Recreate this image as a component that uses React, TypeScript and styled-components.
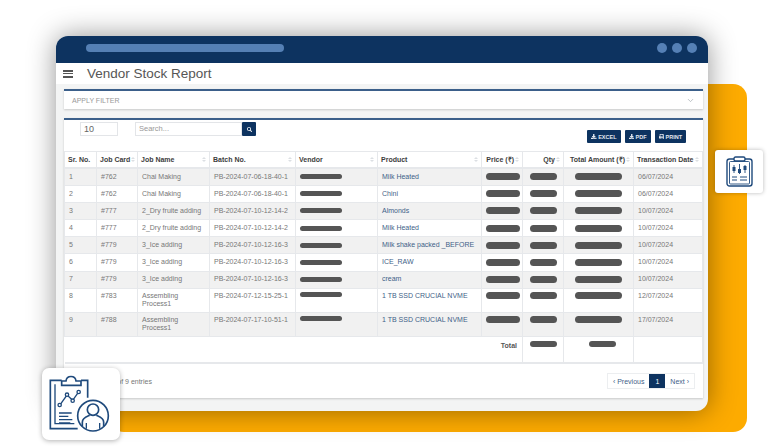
import styled, { createGlobalStyle } from 'styled-components';
import { FaDownload, FaPrint, FaSearch } from 'react-icons/fa';
import { ChevronDown } from 'lucide-react';

const navy = '#0d3360';

const GlobalStyle = createGlobalStyle`
  html, body {
    margin: 0;
    padding: 0;
    background: #fff;
    font-family: "Liberation Sans", Arial, sans-serif;
  }
`;

const Stage = styled.div`
  position: relative;
  width: 770px;
  height: 447px;
  overflow: hidden;
  padding: 36px 0 0 56px;
  box-sizing: border-box;
`;

const OrangePanel = styled.div`
  position: absolute;
  left: 110px;
  top: 84px;
  width: 637px;
  height: 348px;
  background: #fdab00;
  border-radius: 14px;
`;

const Window = styled.div`
  position: relative;
  width: 652px;
  height: 375px;
  border-radius: 12px;
  background: #f3f4f4;
  box-shadow: 0 0 28px rgba(0, 0, 0, 0.42);
  display: flex;
  flex-direction: column;
  overflow: hidden;
`;

const TitleBar = styled.div`
  height: 27px;
  flex: none;
  background: ${navy};
  display: flex;
  align-items: center;
  justify-content: space-between;
  padding: 0 11px 3px 30px;
  box-sizing: border-box;
`;

const AddressPill = styled.div`
  width: 198px;
  height: 8px;
  border-radius: 4px;
  background: #5580b5;
`;

const Dots = styled.div`
  display: flex;
  gap: 5px;
`;

const Dot = styled.span`
  width: 10px;
  height: 10px;
  border-radius: 50%;
  background: #5580b5;
`;

const PageHeader = styled.div`
  height: 21px;
  flex: none;
  background: #fff;
  display: flex;
  align-items: center;
  padding-left: 7px;
`;

const Burger = styled.div`
  width: 10px;
  height: 8px;
  border-top: 2px solid #555;
  border-bottom: 2px solid #555;
  box-sizing: border-box;
  margin-right: 14px;
  position: relative;
  &::after {
    content: '';
    display: block;
    height: 1.5px;
    margin-top: 1.25px;
    background: #555;
  }
`;

const PageTitle = styled.h1`
  margin: 0;
  font-size: 13.5px;
  font-weight: 400;
  color: #565656;
`;

const Content = styled.div`
  flex: 1;
  padding: 5px 5px 13px 8px;
  display: flex;
  flex-direction: column;
  gap: 9px;
`;

const FilterCard = styled.div`
  height: 20px;
  flex: none;
  box-sizing: border-box;
  background: #fff;
  border-top: 2px solid #3b5f8a;
  box-shadow: 0 1px 2px rgba(0, 0, 0, 0.18);
  display: flex;
  align-items: center;
  justify-content: space-between;
  padding: 0 8px;
  font-size: 7px;
  color: #999;
`;

const TableCard = styled.div`
  flex: 1;
  box-sizing: border-box;
  background: #fff;
  border-top: 2px solid #3b5f8a;
  box-shadow: 0 1px 2px rgba(0, 0, 0, 0.18);
  display: flex;
  flex-direction: column;
`;

const Toolbar = styled.div`
  height: 31px;
  flex: none;
  display: flex;
  align-items: flex-start;
  padding: 2px 17px 0 16px;
  box-sizing: border-box;
`;

const LengthInput = styled.div`
  width: 38px;
  height: 14px;
  box-sizing: border-box;
  border: 1px solid #e3e5e8;
  font-size: 9px;
  line-height: 12px;
  padding-left: 3px;
  color: #666;
  margin-right: 17px;
`;

const SearchInput = styled.div`
  width: 107px;
  height: 14px;
  box-sizing: border-box;
  border: 1px solid #e3e5e8;
  font-size: 7.5px;
  line-height: 12px;
  padding-left: 3px;
  color: #999;
`;

const SearchButton = styled.div`
  width: 14px;
  height: 14px;
  background: ${navy};
  color: #fff;
  font-size: 5px;
  display: flex;
  align-items: center;
  justify-content: center;
  border-radius: 1px;
`;

const ExportGroup = styled.div`
  margin-left: auto;
  display: flex;
  gap: 4px;
  padding-top: 8px;
`;

const ExportButton = styled.div`
  height: 13px;
  padding: 0 4px;
  background: ${navy};
  color: #e4e9f0;
  font-size: 5.5px;
  font-weight: 700;
  display: flex;
  align-items: center;
  gap: 1.5px;
  border-radius: 1px;
`;

const Table = styled.table`
  width: 638px;
  table-layout: fixed;
  border-collapse: collapse;
  font-size: 7px;
  color: #777;
`;

const HeadCell = styled.th<{ $right?: boolean }>`
  height: 15px;
  padding: 0 3px;
  border: 1px solid #e6e8eb;
  border-bottom-width: 2px;
  background: #fff;
  color: #3d3d3d;
  font-weight: 700;
  text-align: left;
  white-space: nowrap;
`;

const HeadInner = styled.div<{ $right?: boolean }>`
  display: flex;
  align-items: center;
  justify-content: ${p => (p.$right ? 'flex-end' : 'space-between')};
  gap: 1px;
`;

const SortMark = styled.span`
  flex: none;
  display: flex;
  flex-direction: column;
  gap: 1px;
  &::before,
  &::after {
    content: '';
    width: 0;
    height: 0;
    border-left: 2px solid transparent;
    border-right: 2px solid transparent;
  }
  &::before {
    border-bottom: 2.5px solid #dcdfe3;
  }
  &::after {
    border-top: 2.5px solid #dcdfe3;
  }
`;

const Row = styled.tr<{ $shade: boolean; $tall?: boolean }>`
  height: ${p => (p.$tall ? '24px' : '17.2px')};
  background: ${p => (p.$shade ? '#f1f1f1' : '#fff')};
`;

const Cell = styled.td<{ $product?: boolean }>`
  padding: 0 4px;
  border: 1px solid #e6e8eb;
  vertical-align: ${p => (p.theme?.top ? 'top' : 'inherit')};
  line-height: 8.5px;
  color: ${p => (p.$product ? '#3f5f88' : '#777')};
  tr[data-tall='true'] > & {
    vertical-align: top;
    padding-top: 3px;
  }
`;

const Redacted = styled.div<{ $w: number; $h?: number; $center?: boolean }>`
  width: ${p => p.$w}px;
  height: ${p => p.$h ?? 7}px;
  border-radius: 4px;
  background: #555;
  margin-left: ${p => (p.$center ? 'auto' : '0')};
  margin-right: ${p => (p.$center ? 'auto' : '0')};
`;

const TotalRow = styled.tr`
  height: 27px;
  background: #fff;
`;

const TotalLabel = styled.td`
  text-align: right;
  vertical-align: top;
  padding: 5px 5px 0 0;
  font-weight: 700;
  color: #555;
  border-bottom: 2px solid #e6e8eb;
`;

const TotalCell = styled.td`
  vertical-align: top;
  padding: 4px 0 0 7px;
  border: 1px solid #e6e8eb;
  border-bottom-width: 2px;
`;

const Footer = styled.div`
  flex: 1;
  display: flex;
  align-items: center;
  justify-content: space-between;
  padding: 0 8px 0 5px;
  font-size: 7px;
  color: #777;
`;

const Pager = styled.div`
  display: flex;
  height: 16px;
  border: 1px solid #eceef0;
  box-sizing: border-box;
  color: #3f5f88;
  align-items: stretch;
`;

const PagerItem = styled.span<{ $active?: boolean }>`
  display: flex;
  align-items: center;
  padding: 0 ${p => (p.$active ? '6px' : '5px')};
  gap: 5px;
  background: ${p => (p.$active ? navy : 'transparent')};
  color: ${p => (p.$active ? '#fff' : '#3f5f88')};
`;

const BigBadge = styled.div`
  position: absolute;
  left: 42px;
  top: 368px;
  width: 78px;
  height: 72px;
  background: #fff;
  border-radius: 7px;
  box-shadow: 0 1px 5px rgba(0, 0, 0, 0.3);
  display: flex;
  align-items: center;
  justify-content: center;
`;

const SmallBadge = styled.div`
  position: absolute;
  left: 715px;
  top: 150px;
  width: 48px;
  height: 43px;
  background: #fff;
  border-radius: 3px;
  box-shadow: 0 0 4px rgba(0, 0, 0, 0.28);
  display: flex;
  align-items: center;
  justify-content: center;
`;

function ReportUserIcon() {
  return (
    <svg width="70" height="65" viewBox="45 35 210 195" fill="none" stroke="#1f4a7c" strokeWidth="5">
      <path d="M92 60H58V205H140" />
      <path d="M150 60H170V112" />
      <path d="M72 72V190H130" strokeWidth="4" />
      <path d="M92 75V62H105C107 44 133 44 135 62H150V75Z" fill="#fff" />
      <path d="M88 132L108 104L125 120L142 96" strokeWidth="4" />
      <circle cx="86" cy="134" r="5" fill="#fff" strokeWidth="4" />
      <circle cx="108" cy="103" r="5" fill="#fff" strokeWidth="4" />
      <circle cx="125" cy="121" r="5" fill="#fff" strokeWidth="4" />
      <circle cx="143" cy="95" r="5" fill="#fff" strokeWidth="4" />
      <path d="M84 158H122M84 168H112M84 178H124M84 188H118" strokeWidth="4" />
      <circle cx="186" cy="166" r="46" fill="#fff" />
      <circle cx="186" cy="148" r="17" />
      <path d="M154 198V186C154 172 170 168 176 165M218 198V186C218 172 202 168 196 165" />
      <path d="M166 205V188M206 205V188" strokeWidth="4" />
    </svg>
  );
}

function ClipboardChartIcon() {
  return (
    <svg width="27" height="31" viewBox="0 0 27 31" fill="none" stroke="#1f4a7c" strokeWidth="1.4">
      <rect x="1" y="3" width="25" height="27" rx="2.5" />
      <rect x="3.5" y="5.5" width="20" height="22.5" rx="1" strokeWidth="0.9" />
      <rect x="8" y="1" width="11" height="4" rx="1.5" fill="#fff" />
      <path d="M8 9v8M13.500 8v10M19 9v8" strokeWidth="0.9" />
      <rect x="6.500" y="11" width="3" height="4" fill="#1f4a7c" stroke="none" />
      <rect x="12" y="13" width="3" height="4" fill="#1f4a7c" stroke="none" />
      <rect x="17.500" y="10" width="3" height="4" fill="#1f4a7c" stroke="none" />
      <path d="M6 21h5M6 24h5M14 21h7M14 24h7" strokeWidth="1" />
    </svg>
  );
}

const columns = [
  { label: 'Sr. No.', width: 32, sort: false },
  { label: 'Job Card', width: 41, sort: true },
  { label: 'Job Name', width: 72, sort: true },
  { label: 'Batch No.', width: 86, sort: true },
  { label: 'Vendor', width: 82, sort: true },
  { label: 'Product', width: 104, sort: true },
  { label: 'Price (₹)', width: 41, sort: true, right: true },
  { label: 'Qty', width: 41, sort: true, right: true },
  { label: 'Total Amount (₹)', width: 70, sort: true, right: true },
  { label: 'Transaction Date', width: 69, sort: true },
];

const rows = [
  { card: '#762', job: 'Chai Making', batch: 'PB-2024-07-06-18-40-1', product: 'Milk Heated', date: '06/07/2024' },
  { card: '#762', job: 'Chai Making', batch: 'PB-2024-07-06-18-40-1', product: 'Chini', date: '06/07/2024' },
  { card: '#777', job: '2_Dry fruite adding', batch: 'PB-2024-07-10-12-14-2', product: 'Almonds', date: '10/07/2024' },
  { card: '#777', job: '2_Dry fruite adding', batch: 'PB-2024-07-10-12-14-2', product: 'Milk Heated', date: '10/07/2024' },
  { card: '#779', job: '3_Ice adding', batch: 'PB-2024-07-10-12-16-3', product: 'Milk shake packed _BEFORE', date: '10/07/2024' },
  { card: '#779', job: '3_Ice adding', batch: 'PB-2024-07-10-12-16-3', product: 'ICE_RAW', date: '10/07/2024' },
  { card: '#779', job: '3_Ice adding', batch: 'PB-2024-07-10-12-16-3', product: 'cream', date: '10/07/2024' },
  { card: '#783', job: 'Assembling Process1', batch: 'PB-2024-07-12-15-25-1', product: '1 TB SSD CRUCIAL NVME', date: '12/07/2024', tall: true },
  { card: '#788', job: 'Assembling Process1', batch: 'PB-2024-07-17-10-51-1', product: '1 TB SSD CRUCIAL NVME', date: '17/07/2024', tall: true },
];

export default function App() {
  return (
    <>
      <GlobalStyle />
      <Stage>
        <OrangePanel />
        <Window>
          <TitleBar>
            <AddressPill />
            <Dots>
              <Dot />
              <Dot />
              <Dot />
            </Dots>
          </TitleBar>
          <PageHeader>
            <Burger />
            <PageTitle>Vendor Stock Report</PageTitle>
          </PageHeader>
          <Content>
            <FilterCard>
              APPLY FILTER
              <ChevronDown size={9} color="#aab0b6" />
            </FilterCard>
            <TableCard>
              <Toolbar>
                <LengthInput>10</LengthInput>
                <SearchInput>Search...</SearchInput>
                <SearchButton>
                  <FaSearch />
                </SearchButton>
                <ExportGroup>
                  <ExportButton>
                    <FaDownload /> EXCEL
                  </ExportButton>
                  <ExportButton>
                    <FaDownload /> PDF
                  </ExportButton>
                  <ExportButton>
                    <FaPrint /> PRINT
                  </ExportButton>
                </ExportGroup>
              </Toolbar>
              <Table>
                <colgroup>
                  {columns.map(col => (
                    <col key={col.label} width={col.width} />
                  ))}
                </colgroup>
                <thead>
                  <tr>
                    {columns.map(col => (
                      <HeadCell key={col.label}>
                        <HeadInner $right={col.right}>
                          {col.label}
                          {col.sort && <SortMark />}
                        </HeadInner>
                      </HeadCell>
                    ))}
                  </tr>
                </thead>
                <tbody>
                  {rows.map((row, i) => (
                    <Row key={i} $shade={i % 2 === 0} $tall={row.tall} data-tall={row.tall ? 'true' : 'false'}>
                      <Cell>{i + 1}</Cell>
                      <Cell>{row.card}</Cell>
                      <Cell>{row.job}</Cell>
                      <Cell>{row.batch}</Cell>
                      <Cell>
                        <Redacted $w={42} $h={5} />
                      </Cell>
                      <Cell $product>{row.product}</Cell>
                      <Cell>
                        <Redacted $w={34} />
                      </Cell>
                      <Cell>
                        <Redacted $w={27} $center />
                      </Cell>
                      <Cell>
                        <Redacted $w={47} $center />
                      </Cell>
                      <Cell>{row.date}</Cell>
                    </Row>
                  ))}
                  <TotalRow>
                    <TotalLabel colSpan={7}>Total</TotalLabel>
                    <TotalCell>
                      <Redacted $w={27} $h={6} />
                    </TotalCell>
                    <TotalCell>
                      <Redacted $w={27} $h={6} $center />
                    </TotalCell>
                    <TotalCell />
                  </TotalRow>
                </tbody>
              </Table>
              <Footer>
                <span>Showing 1 to 9 of 9 entries</span>
                <Pager>
                  <PagerItem>‹ Previous</PagerItem>
                  <PagerItem $active>1</PagerItem>
                  <PagerItem>Next ›</PagerItem>
                </Pager>
              </Footer>
            </TableCard>
          </Content>
        </Window>
        <BigBadge>
          <ReportUserIcon />
        </BigBadge>
        <SmallBadge>
          <ClipboardChartIcon />
        </SmallBadge>
      </Stage>
    </>
  );
}
